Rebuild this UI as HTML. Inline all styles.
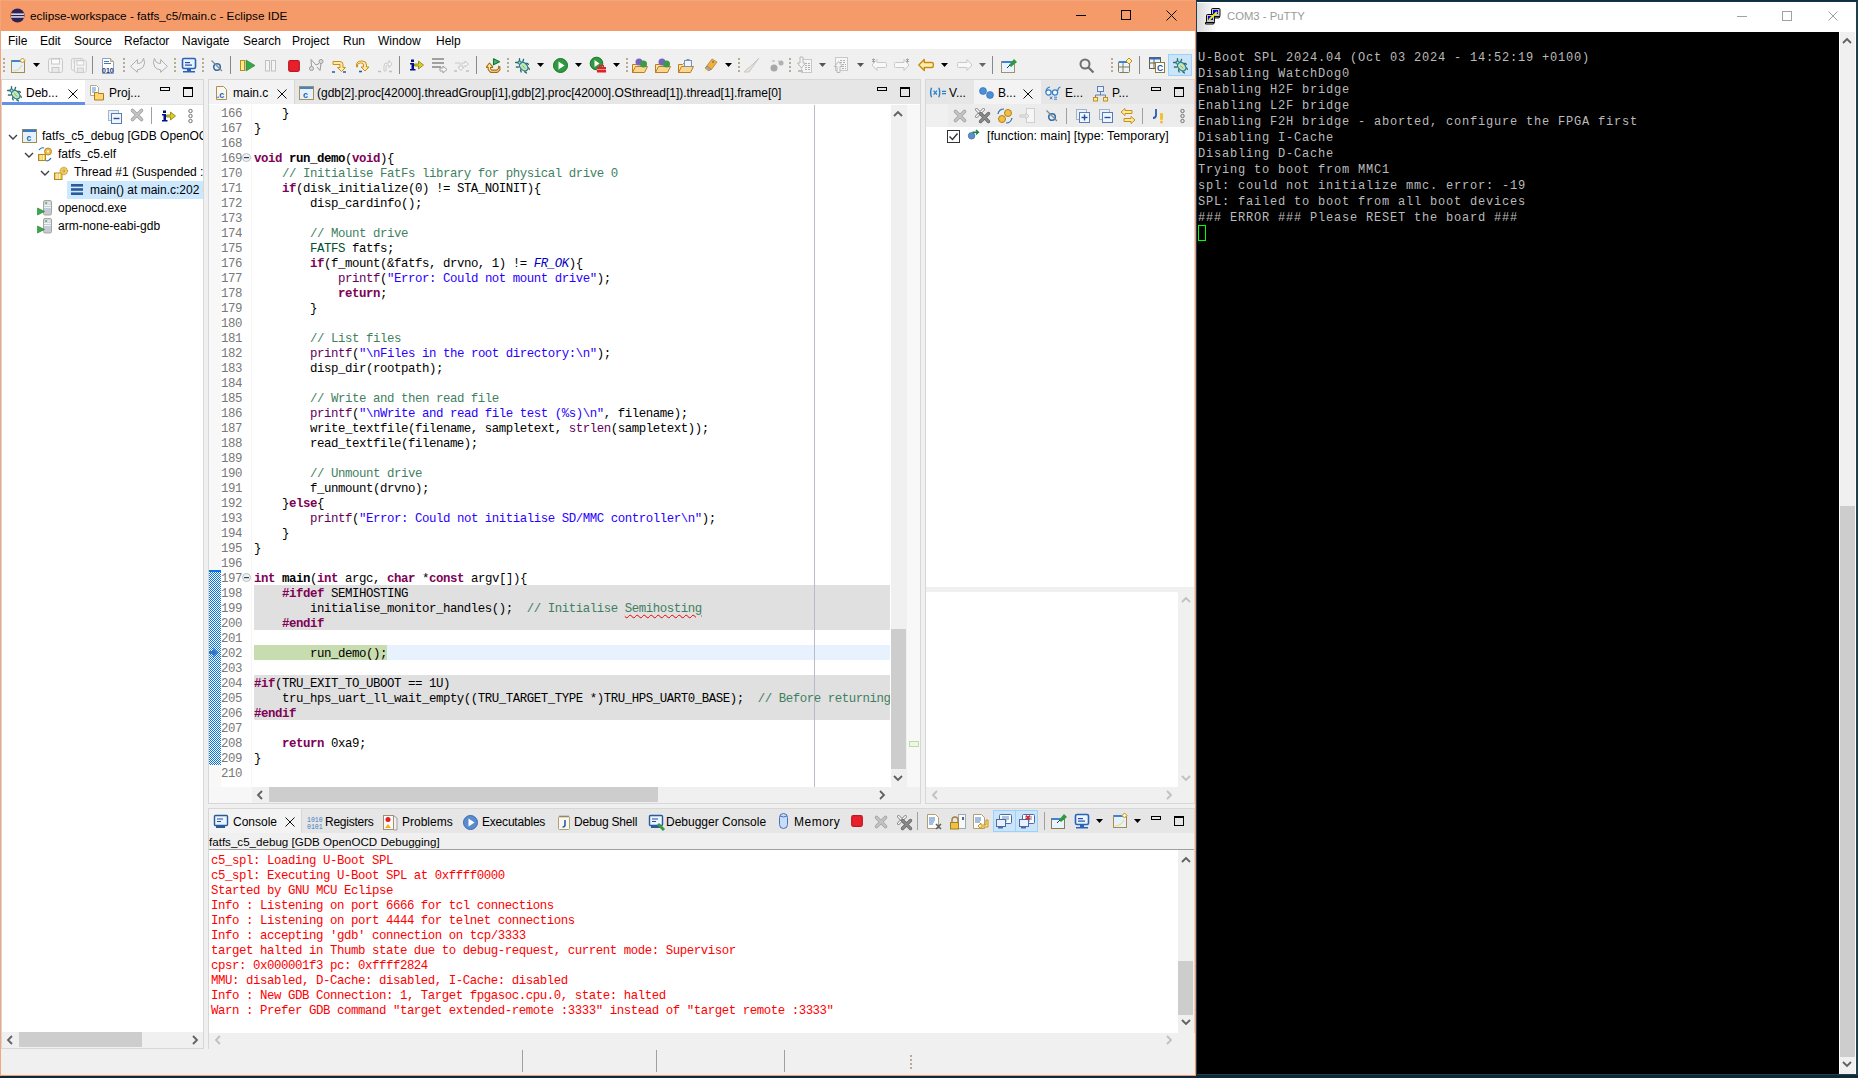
<!DOCTYPE html><html><head><meta charset="utf-8"><style>
html,body{margin:0;padding:0;width:1858px;height:1078px;overflow:hidden;background:#0e2a3a}
body>div,body>svg{position:absolute}
div{position:absolute;box-sizing:border-box}
svg{position:absolute;overflow:visible}
.ui{font-family:"Liberation Sans",sans-serif;font-size:12px;line-height:15px;color:#000;white-space:pre}
.code{font-family:"Liberation Mono",monospace;font-size:12.4px;line-height:15px;white-space:pre;color:#000;letter-spacing:-0.44px}
.con{font-family:"Liberation Mono",monospace;font-size:12.4px;line-height:15px;white-space:pre;color:#f00;letter-spacing:-0.44px}
.pt{font-family:"Liberation Mono",monospace;font-size:12px;line-height:16px;white-space:pre;color:#bbbbbb;letter-spacing:0.8px}
.k{color:#7f0055;font-weight:bold}
.c{color:#3f7f5f}
.s{color:#2a00ff}
.t{color:#005032}
.m{color:#64005a}
.b{font-weight:bold}
.e{color:#0000c0;font-style:italic}
</style></head><body>

<div style="left:0px;top:0px;width:1196px;height:1076px;background:#f59b69;"></div>
<div style="left:0px;top:0px;width:1196px;height:1px;background:#f3a57b;"></div>
<div style="left:0px;top:0px;width:1px;height:1076px;background:#f3a57b;"></div>
<div style="left:1px;top:31px;width:1194px;height:1044px;background:#f0f0f0;"></div>
<svg style="left:10px;top:8px" width="15" height="15" viewBox="0 0 15 15"><circle cx="7.5" cy="7.5" r="7" fill="#2c2255"/><rect x="1" y="5.5" width="13" height="1.3" fill="#fff"/><rect x="1" y="8.3" width="13" height="1.3" fill="#fff"/><path d="M1 7.5a6.5 6.5 0 0 1 0.6-2.7" stroke="#f7941e" stroke-width="1" fill="none"/></svg>
<div class="ui" style="left:30px;top:8px;font-size:11.75px">eclipse-workspace - fatfs_c5/main.c - Eclipse IDE</div>
<div style="left:1076px;top:15px;width:10px;height:1px;background:#000;"></div>
<div style="left:1121px;top:10px;width:10px;height:10px;background:transparent;border:1px solid #000"></div>
<svg style="left:1166px;top:10px" width="11" height="11" viewBox="0 0 11 11"><path d="M0.5 0.5L10.5 10.5M10.5 0.5L0.5 10.5" stroke="#000" stroke-width="1"/></svg>
<div style="left:1px;top:31px;width:1194px;height:18px;background:#fff;"></div>
<div class="ui" style="left:8px;top:34px;">File</div>
<div class="ui" style="left:40px;top:34px;">Edit</div>
<div class="ui" style="left:74px;top:34px;">Source</div>
<div class="ui" style="left:124px;top:34px;">Refactor</div>
<div class="ui" style="left:182px;top:34px;">Navigate</div>
<div class="ui" style="left:243px;top:34px;">Search</div>
<div class="ui" style="left:292px;top:34px;">Project</div>
<div class="ui" style="left:343px;top:34px;">Run</div>
<div class="ui" style="left:378px;top:34px;">Window</div>
<div class="ui" style="left:436px;top:34px;">Help</div>
<div style="left:1px;top:49px;width:1194px;height:30px;background:#f0f0f0;"></div>
<div style="left:1px;top:79px;width:203px;height:970px;background:#fff;border:1px solid #d7d7d7"></div>
<div style="left:2px;top:80px;width:201px;height:24px;background:#f0f0f0;"></div>
<div style="left:2px;top:80px;width:83px;height:22px;background:#fff;"></div>
<div style="left:2px;top:102px;width:83px;height:3px;background:#6390e8;"></div>
<div style="left:85px;top:104px;width:118px;height:1px;background:#e2e2e2;"></div>
<div class="ui" style="left:26px;top:86px;">Deb...</div>
<svg style="left:68px;top:89px" width="10" height="10" viewBox="0 0 10 10"><path d="M0.5 0.5L9.5 9.5M9.5 0.5L0.5 9.5" stroke="#000" stroke-width="0.95"/></svg>
<div class="ui" style="left:109px;top:86px;">Proj...</div>
<div style="left:160px;top:87px;width:10px;height:4px;background:transparent;border:1.3px solid #000"></div>
<div style="left:183px;top:87px;width:10px;height:10px;background:transparent;border:1.3px solid #000;border-top-width:2px"></div>
<div style="left:208px;top:79px;width:713px;height:725px;background:#fff;border:1px solid #d7d7d7"></div>
<div style="left:209px;top:80px;width:711px;height:24px;background:#e6e6e6;"></div>
<div style="left:209px;top:80px;width:85px;height:24px;background:#f3f3f3;"></div>
<div style="left:294px;top:80px;width:1px;height:24px;background:#d8d8d8;"></div>
<div class="ui" style="left:233px;top:86px;">main.c</div>
<svg style="left:277px;top:89px" width="10" height="10" viewBox="0 0 10 10"><path d="M0.5 0.5L9.5 9.5M9.5 0.5L0.5 9.5" stroke="#000" stroke-width="0.95"/></svg>
<div class="ui" style="left:317px;top:86px;">(gdb[2].proc[42000].threadGroup[i1],gdb[2].proc[42000].OSthread[1]).thread[1].frame[0]</div>
<div style="left:877px;top:87px;width:10px;height:4px;background:transparent;border:1.3px solid #000"></div>
<div style="left:900px;top:87px;width:10px;height:10px;background:transparent;border:1.3px solid #000;border-top-width:2px"></div>
<div style="left:925px;top:79px;width:270px;height:725px;background:#fff;border:1px solid #d7d7d7"></div>
<div style="left:926px;top:80px;width:268px;height:24px;background:#e6e6e6;"></div>
<div style="left:974px;top:80px;width:67px;height:24px;background:#f3f3f3;"></div>
<div style="left:926px;top:104px;width:268px;height:23px;background:#ececec;"></div>
<div style="left:926px;top:104px;width:22px;height:23px;background:#f0f0f0;"></div>
<div style="left:926px;top:587px;width:268px;height:5px;background:#f0f0f0;"></div>
<div style="left:1178px;top:592px;width:16px;height:195px;background:#f0f0f0;"></div>
<div style="left:926px;top:787px;width:268px;height:16px;background:#f0f0f0;"></div>
<svg style="left:0;top:0" width="1858" height="1078"><path d="M1182 602L1186 598L1190 602" stroke="#c0c0c0" stroke-width="1.8" fill="none"/></svg>
<svg style="left:0;top:0" width="1858" height="1078"><path d="M1182 776L1186 780L1190 776" stroke="#c0c0c0" stroke-width="1.8" fill="none"/></svg>
<svg style="left:0;top:0" width="1858" height="1078"><path d="M937 791L933 795L937 799" stroke="#c0c0c0" stroke-width="1.8" fill="none"/></svg>
<svg style="left:0;top:0" width="1858" height="1078"><path d="M1167 791L1171 795L1167 799" stroke="#c0c0c0" stroke-width="1.8" fill="none"/></svg>
<svg style="left:929px;top:87px" width="18" height="11" viewBox="0 0 18 11"><g stroke="#2a80c8" fill="none" stroke-width="1.4"><path d="M2.6 0.8Q0.6 5.5 2.6 10.2M9.8 0.8Q11.8 5.5 9.8 10.2"/><path d="M4.6 3.6L8 7.6M8 3.6L4.6 7.6" stroke-width="1.3"/><path d="M13 4.4H17M13 6.6H17" stroke-width="1.1"/></g></svg>
<div class="ui" style="left:949px;top:86px;">V...</div>
<div class="ui" style="left:998px;top:86px;">B...</div>
<svg style="left:1023px;top:89px" width="10" height="10" viewBox="0 0 10 10"><path d="M0.5 0.5L9.5 9.5M9.5 0.5L0.5 9.5" stroke="#000" stroke-width="0.95"/></svg>
<div class="ui" style="left:1065px;top:86px;">E...</div>
<div class="ui" style="left:1112px;top:86px;">P...</div>
<div style="left:1151px;top:87px;width:10px;height:4px;background:transparent;border:1.3px solid #000"></div>
<div style="left:1174px;top:87px;width:10px;height:10px;background:transparent;border:1.3px solid #000;border-top-width:2px"></div>
<div class="ui" style="left:987px;top:129px;font-size:12.3px">[function: main] [type: Temporary]</div>
<svg style="left:947px;top:130px" width="13" height="13" viewBox="0 0 13 13"><rect x="0.5" y="0.5" width="12" height="12" fill="#fff" stroke="#333"/><path d="M2.5 6.5l3 3 5-6" stroke="#333" stroke-width="1.4" fill="none"/></svg>
<div style="left:208px;top:808px;width:987px;height:241px;background:#fff;border:1px solid #d7d7d7;border-bottom:none"></div>
<div style="left:209px;top:809px;width:985px;height:24px;background:#e6e6e6;"></div>
<div style="left:209px;top:809px;width:92px;height:24px;background:#f3f3f3;"></div>
<div style="left:301px;top:809px;width:1px;height:24px;background:#d8d8d8;"></div>
<div style="left:209px;top:833px;width:985px;height:16px;background:#f0f0f0;"></div>
<div style="left:209px;top:849px;width:985px;height:1px;background:#a0a0a0;"></div>
<div class="ui" style="left:209px;top:834px;font-size:11.6px">fatfs_c5_debug [GDB OpenOCD Debugging]</div>
<div style="left:1178px;top:850px;width:16px;height:183px;background:#f0f0f0;"></div>
<div style="left:1178px;top:961px;width:15px;height:54px;background:#cdcdcd;"></div>
<svg style="left:0;top:0" width="1858" height="1078"><path d="M1182 862L1186 858L1190 862" stroke="#606060" stroke-width="1.8" fill="none"/></svg>
<svg style="left:0;top:0" width="1858" height="1078"><path d="M1182 1020L1186 1024L1190 1020" stroke="#606060" stroke-width="1.8" fill="none"/></svg>
<div style="left:209px;top:1033px;width:986px;height:16px;background:#f0f0f0;"></div>
<svg style="left:0;top:0" width="1858" height="1078"><path d="M220 1036L216 1040L220 1044" stroke="#c0c0c0" stroke-width="1.8" fill="none"/></svg>
<svg style="left:0;top:0" width="1858" height="1078"><path d="M1167 1036L1171 1040L1167 1044" stroke="#c0c0c0" stroke-width="1.8" fill="none"/></svg>
<div class="ui" style="left:233px;top:815px;letter-spacing:0px">Console</div>
<div class="ui" style="left:325px;top:815px;letter-spacing:-0.25px">Registers</div>
<div class="ui" style="left:402px;top:815px;letter-spacing:0px">Problems</div>
<div class="ui" style="left:482px;top:815px;letter-spacing:-0.2px">Executables</div>
<div class="ui" style="left:574px;top:815px;letter-spacing:-0.2px">Debug Shell</div>
<div class="ui" style="left:666px;top:815px;letter-spacing:0px">Debugger Console</div>
<div class="ui" style="left:794px;top:815px;letter-spacing:0.5px">Memory</div>
<svg style="left:285px;top:817px" width="10" height="10" viewBox="0 0 10 10"><path d="M0.5 0.5L9.5 9.5M9.5 0.5L0.5 9.5" stroke="#000" stroke-width="0.95"/></svg>
<div style="left:1151px;top:816px;width:10px;height:4px;background:transparent;border:1.3px solid #000"></div>
<div style="left:1174px;top:816px;width:10px;height:10px;background:transparent;border:1.3px solid #000;border-top-width:2px"></div>
<div style="left:522px;top:1050px;width:1px;height:22px;background:#a0a0a0;"></div>
<div style="left:656px;top:1050px;width:1px;height:22px;background:#a0a0a0;"></div>
<div style="left:784px;top:1050px;width:1px;height:22px;background:#a0a0a0;"></div>
<svg style="left:910px;top:1055px" width="2" height="14"><rect x="0" y="0" width="2" height="2" fill="#b8ab94"/><rect x="0" y="4" width="2" height="2" fill="#b8ab94"/><rect x="0" y="8" width="2" height="2" fill="#b8ab94"/><rect x="0" y="12" width="2" height="2" fill="#b8ab94"/></svg>
<div style="left:209px;top:105px;width:12px;height:682px;background:#f8f8f8;"></div>
<svg style="left:209px;top:570px" width="12" height="195"><defs><pattern id="chk" width="2" height="2" patternUnits="userSpaceOnUse"><rect width="2" height="2" fill="#0a74e0"/><rect width="1" height="1" fill="#fff"/><rect x="1" y="1" width="1" height="1" fill="#fff"/></pattern></defs><rect width="12" height="195" fill="url(#chk)"/><rect width="12" height="2" fill="#0a74e0"/></svg>
<div style="left:251px;top:105px;width:1px;height:682px;background:#f6f6f6;"></div>
<div style="left:254px;top:585px;width:636px;height:45px;background:#e0e0e0;"></div>
<div style="left:254px;top:675px;width:636px;height:45px;background:#e0e0e0;"></div>
<div style="left:387px;top:645px;width:503px;height:15px;background:#e8f2fe;"></div>
<div style="left:254px;top:645px;width:133px;height:15px;background:#c7dcaf;"></div>
<div style="left:814px;top:105px;width:1px;height:682px;background:#b8bcc4;"></div>
<div style="left:202px;top:105px;width:40px;height:682px;overflow:hidden"><div class="code" style="left:0;top:2px;width:40px;text-align:right;color:#787878">166</div><div class="code" style="left:0;top:17px;width:40px;text-align:right;color:#787878">167</div><div class="code" style="left:0;top:32px;width:40px;text-align:right;color:#787878">168</div><div class="code" style="left:0;top:47px;width:40px;text-align:right;color:#787878">169</div><div class="code" style="left:0;top:62px;width:40px;text-align:right;color:#787878">170</div><div class="code" style="left:0;top:77px;width:40px;text-align:right;color:#787878">171</div><div class="code" style="left:0;top:92px;width:40px;text-align:right;color:#787878">172</div><div class="code" style="left:0;top:107px;width:40px;text-align:right;color:#787878">173</div><div class="code" style="left:0;top:122px;width:40px;text-align:right;color:#787878">174</div><div class="code" style="left:0;top:137px;width:40px;text-align:right;color:#787878">175</div><div class="code" style="left:0;top:152px;width:40px;text-align:right;color:#787878">176</div><div class="code" style="left:0;top:167px;width:40px;text-align:right;color:#787878">177</div><div class="code" style="left:0;top:182px;width:40px;text-align:right;color:#787878">178</div><div class="code" style="left:0;top:197px;width:40px;text-align:right;color:#787878">179</div><div class="code" style="left:0;top:212px;width:40px;text-align:right;color:#787878">180</div><div class="code" style="left:0;top:227px;width:40px;text-align:right;color:#787878">181</div><div class="code" style="left:0;top:242px;width:40px;text-align:right;color:#787878">182</div><div class="code" style="left:0;top:257px;width:40px;text-align:right;color:#787878">183</div><div class="code" style="left:0;top:272px;width:40px;text-align:right;color:#787878">184</div><div class="code" style="left:0;top:287px;width:40px;text-align:right;color:#787878">185</div><div class="code" style="left:0;top:302px;width:40px;text-align:right;color:#787878">186</div><div class="code" style="left:0;top:317px;width:40px;text-align:right;color:#787878">187</div><div class="code" style="left:0;top:332px;width:40px;text-align:right;color:#787878">188</div><div class="code" style="left:0;top:347px;width:40px;text-align:right;color:#787878">189</div><div class="code" style="left:0;top:362px;width:40px;text-align:right;color:#787878">190</div><div class="code" style="left:0;top:377px;width:40px;text-align:right;color:#787878">191</div><div class="code" style="left:0;top:392px;width:40px;text-align:right;color:#787878">192</div><div class="code" style="left:0;top:407px;width:40px;text-align:right;color:#787878">193</div><div class="code" style="left:0;top:422px;width:40px;text-align:right;color:#787878">194</div><div class="code" style="left:0;top:437px;width:40px;text-align:right;color:#787878">195</div><div class="code" style="left:0;top:452px;width:40px;text-align:right;color:#787878">196</div><div class="code" style="left:0;top:467px;width:40px;text-align:right;color:#787878">197</div><div class="code" style="left:0;top:482px;width:40px;text-align:right;color:#787878">198</div><div class="code" style="left:0;top:497px;width:40px;text-align:right;color:#787878">199</div><div class="code" style="left:0;top:512px;width:40px;text-align:right;color:#787878">200</div><div class="code" style="left:0;top:527px;width:40px;text-align:right;color:#787878">201</div><div class="code" style="left:0;top:542px;width:40px;text-align:right;color:#787878">202</div><div class="code" style="left:0;top:557px;width:40px;text-align:right;color:#787878">203</div><div class="code" style="left:0;top:572px;width:40px;text-align:right;color:#787878">204</div><div class="code" style="left:0;top:587px;width:40px;text-align:right;color:#787878">205</div><div class="code" style="left:0;top:602px;width:40px;text-align:right;color:#787878">206</div><div class="code" style="left:0;top:617px;width:40px;text-align:right;color:#787878">207</div><div class="code" style="left:0;top:632px;width:40px;text-align:right;color:#787878">208</div><div class="code" style="left:0;top:647px;width:40px;text-align:right;color:#787878">209</div><div class="code" style="left:0;top:662px;width:40px;text-align:right;color:#787878">210</div></div>
<div style="left:254px;top:105px;width:636px;height:682px;overflow:hidden"><div class="code" style="left:0;top:2px">    }</div><div class="code" style="left:0;top:17px">}</div><div class="code" style="left:0;top:32px"></div><div class="code" style="left:0;top:47px"><span class="k">void</span> <span class="b">run_demo</span>(<span class="k">void</span>){</div><div class="code" style="left:0;top:62px">    <span class="c">// Initialise FatFs library for physical drive 0</span></div><div class="code" style="left:0;top:77px">    <span class="k">if</span>(disk_initialize(0) != STA_NOINIT){</div><div class="code" style="left:0;top:92px">        disp_cardinfo();</div><div class="code" style="left:0;top:107px"></div><div class="code" style="left:0;top:122px">        <span class="c">// Mount drive</span></div><div class="code" style="left:0;top:137px">        <span class="t">FATFS</span> fatfs;</div><div class="code" style="left:0;top:152px">        <span class="k">if</span>(f_mount(&amp;fatfs, drvno, 1) != <span class="e">FR_OK</span>){</div><div class="code" style="left:0;top:167px">            <span class="m">printf</span>(<span class="s">"Error: Could not mount drive"</span>);</div><div class="code" style="left:0;top:182px">            <span class="k">return</span>;</div><div class="code" style="left:0;top:197px">        }</div><div class="code" style="left:0;top:212px"></div><div class="code" style="left:0;top:227px">        <span class="c">// List files</span></div><div class="code" style="left:0;top:242px">        <span class="m">printf</span>(<span class="s">"\nFiles in the root directory:\n"</span>);</div><div class="code" style="left:0;top:257px">        disp_dir(rootpath);</div><div class="code" style="left:0;top:272px"></div><div class="code" style="left:0;top:287px">        <span class="c">// Write and then read file</span></div><div class="code" style="left:0;top:302px">        <span class="m">printf</span>(<span class="s">"\nWrite and read file test (%s)\n"</span>, filename);</div><div class="code" style="left:0;top:317px">        write_textfile(filename, sampletext, <span class="m">strlen</span>(sampletext));</div><div class="code" style="left:0;top:332px">        read_textfile(filename);</div><div class="code" style="left:0;top:347px"></div><div class="code" style="left:0;top:362px">        <span class="c">// Unmount drive</span></div><div class="code" style="left:0;top:377px">        f_unmount(drvno);</div><div class="code" style="left:0;top:392px">    }<span class="k">else</span>{</div><div class="code" style="left:0;top:407px">        <span class="m">printf</span>(<span class="s">"Error: Could not initialise SD/MMC controller\n"</span>);</div><div class="code" style="left:0;top:422px">    }</div><div class="code" style="left:0;top:437px">}</div><div class="code" style="left:0;top:452px"></div><div class="code" style="left:0;top:467px"><span class="k">int</span> <span class="b">main</span>(<span class="k">int</span> argc, <span class="k">char</span> *<span class="k">const</span> argv[]){</div><div class="code" style="left:0;top:482px">    <span class="k">#ifdef</span> SEMIHOSTING</div><div class="code" style="left:0;top:497px">        initialise_monitor_handles();  <span class="c">// Initialise </span><span class="c" style="text-decoration:underline wavy #e00;text-decoration-thickness:1px;text-underline-offset:2px">Semihosting</span></div><div class="code" style="left:0;top:512px">    <span class="k">#endif</span></div><div class="code" style="left:0;top:527px"></div><div class="code" style="left:0;top:542px">        run_demo();</div><div class="code" style="left:0;top:557px"></div><div class="code" style="left:0;top:572px"><span class="k">#if</span>(TRU_EXIT_TO_UBOOT == 1U)</div><div class="code" style="left:0;top:587px">    tru_hps_uart_ll_wait_empty((TRU_TARGET_TYPE *)TRU_HPS_UART0_BASE);  <span class="c">// Before returning to U-Boot</span></div><div class="code" style="left:0;top:602px"><span class="k">#endif</span></div><div class="code" style="left:0;top:617px"></div><div class="code" style="left:0;top:632px">    <span class="k">return</span> 0xa9;</div><div class="code" style="left:0;top:647px">}</div><div class="code" style="left:0;top:662px"></div></div>
<svg style="left:242px;top:153px" width="9" height="9" viewBox="0 0 9 9"><circle cx="4.5" cy="4.5" r="4" fill="#eef2f6" stroke="#b9c0c8" stroke-width="1"/><rect x="2" y="4" width="5" height="1.2" fill="#404040"/></svg>
<svg style="left:242px;top:573px" width="9" height="9" viewBox="0 0 9 9"><circle cx="4.5" cy="4.5" r="4" fill="#eef2f6" stroke="#b9c0c8" stroke-width="1"/><rect x="2" y="4" width="5" height="1.2" fill="#404040"/></svg>
<svg style="left:209px;top:648px" width="10" height="9" viewBox="0 0 10 9"><path d="M0 3h4v-3l5 4.5-5 4.5v-3h-4z" fill="#2f78c8"/></svg>
<div style="left:891px;top:105px;width:16px;height:682px;background:#f0f0f0;"></div>
<div style="left:891px;top:629px;width:15px;height:140px;background:#cdcdcd;"></div>
<svg style="left:0;top:0" width="1858" height="1078"><path d="M894 116L898 112L902 116" stroke="#606060" stroke-width="1.8" fill="none"/></svg>
<svg style="left:0;top:0" width="1858" height="1078"><path d="M894 776L898 780L902 776" stroke="#606060" stroke-width="1.8" fill="none"/></svg>
<div style="left:907px;top:105px;width:13px;height:682px;background:#f8f8f8;"></div>
<div style="left:909px;top:741px;width:10px;height:6px;background:#eef6e6;border:1px solid #bcdca4"></div>
<div style="left:209px;top:787px;width:43px;height:16px;background:#f7f7f7;"></div>
<div style="left:252px;top:787px;width:668px;height:16px;background:#f0f0f0;"></div>
<div style="left:269px;top:787px;width:389px;height:15px;background:#cdcdcd;"></div>
<svg style="left:0;top:0" width="1858" height="1078"><path d="M262 791L258 795L262 799" stroke="#606060" stroke-width="1.8" fill="none"/></svg>
<svg style="left:0;top:0" width="1858" height="1078"><path d="M880 791L884 795L880 799" stroke="#606060" stroke-width="1.8" fill="none"/></svg>
<div style="left:67px;top:181px;width:136px;height:18px;background:#cce8ff;"></div>
<div style="left:2px;top:105px;width:201px;height:927px;overflow:hidden">
<svg style="left:6px;top:29px" width="10" height="6"><path d="M1 1L5 5L9 1" stroke="#404040" stroke-width="1.4" fill="none"/></svg>
<svg style="left:20px;top:24px" width="16" height="16" viewBox="0 0 16 16"><rect x="0.5" y="0.5" width="14" height="13" fill="#e4f2fe" stroke="#a08a48"/><rect x="1" y="0.5" width="13" height="2.5" fill="#3a7ac8"/><text x="4.5" y="11.5" font-family="Liberation Sans" font-weight="bold" font-size="8.5" fill="#2a62b0">c</text></svg>
<div class="ui" style="left:40px;top:24px">fatfs_c5_debug [GDB OpenOCD Debugging]</div>
<svg style="left:22px;top:47px" width="10" height="6"><path d="M1 1L5 5L9 1" stroke="#404040" stroke-width="1.4" fill="none"/></svg>
<svg style="left:36px;top:42px" width="16" height="16" viewBox="0 0 16 16"><rect x="0.5" y="7.5" width="7" height="6" fill="#f0d060" stroke="#b08a20"/><path d="M3 8v5M5.5 8v5" stroke="#fff4c0"/><circle cx="10" cy="4.5" r="3.5" fill="#f2c040" stroke="#b08a40"/><circle cx="10" cy="4.5" r="1" fill="#fff"/><path d="M1 3q2-3 5-2M8 14q3 0 5-3" stroke="#2a6ab0" fill="none" stroke-width="1.2"/></svg>
<div class="ui" style="left:56px;top:42px">fatfs_c5.elf</div>
<svg style="left:38px;top:65px" width="10" height="6"><path d="M1 1L5 5L9 1" stroke="#404040" stroke-width="1.4" fill="none"/></svg>
<svg style="left:52px;top:61px" width="16" height="16" viewBox="0 0 16 16"><rect x="0.5" y="7" width="7.5" height="6.5" fill="#f0d060" stroke="#b08a20"/><path d="M3 7.5v5.5M5.5 7.5v5.5" stroke="#fff4c0" stroke-width="1.2"/><circle cx="9.8" cy="5" r="3.8" fill="#f2c040" stroke="#a08040" stroke-width="0.8" stroke-dasharray="1.2 0.8"/><circle cx="9.8" cy="5" r="2.6" fill="#f8d060"/><circle cx="9.8" cy="5" r="1" fill="#fff" stroke="#806030" stroke-width="0.6"/></svg>
<div class="ui" style="left:72px;top:60px">Thread #1 (Suspended : Breakpoint)</div>
<svg style="left:69px;top:79px" width="16" height="16" viewBox="0 0 16 16"><rect x="0" y="0" width="12" height="2.6" fill="#2a5a9a"/><rect x="0" y="4.2" width="12" height="2.6" fill="#2a5a9a"/><rect x="0" y="8.4" width="12" height="2.6" fill="#2a5a9a"/></svg>
<div class="ui" style="left:88px;top:78px">main() at main.c:202 0xffff2824</div>
<svg style="left:35px;top:95px" width="16" height="16" viewBox="0 0 16 16"><rect x="6.5" y="0.5" width="8" height="14.5" rx="1.5" fill="#c4cad8" stroke="#a8a890"/><rect x="7.5" y="1.5" width="6" height="3" fill="#dfe4ee"/><path d="M8.5 1.8v2.4l2-1.2z" fill="#2a9a40"/><path d="M7 5.5h7M7 7.5h7" stroke="#f0f2f8" stroke-width="1"/><path d="M0.5 8L7.5 11.5 0.5 15z" fill="#3aa84a" stroke="#208030" stroke-width="0.6"/></svg>
<div class="ui" style="left:56px;top:96px">openocd.exe</div>
<svg style="left:35px;top:113px" width="16" height="16" viewBox="0 0 16 16"><rect x="6.5" y="0.5" width="8" height="14.5" rx="1.5" fill="#c4cad8" stroke="#a8a890"/><rect x="7.5" y="1.5" width="6" height="3" fill="#dfe4ee"/><path d="M8.5 1.8v2.4l2-1.2z" fill="#2a9a40"/><path d="M7 5.5h7M7 7.5h7" stroke="#f0f2f8" stroke-width="1"/><path d="M0.5 8L7.5 11.5 0.5 15z" fill="#3aa84a" stroke="#208030" stroke-width="0.6"/></svg>
<div class="ui" style="left:56px;top:114px">arm-none-eabi-gdb</div>
</div>
<div style="left:203px;top:105px;width:1px;height:927px;background:#d7d7d7;"></div>
<div style="left:2px;top:1032px;width:201px;height:16px;background:#f0f0f0;"></div>
<div style="left:19px;top:1032px;width:123px;height:15px;background:#cdcdcd;"></div>
<svg style="left:0;top:0" width="1858" height="1078"><path d="M12 1036L8 1040L12 1044" stroke="#606060" stroke-width="1.8" fill="none"/></svg>
<svg style="left:0;top:0" width="1858" height="1078"><path d="M193 1036L197 1040L193 1044" stroke="#606060" stroke-width="1.8" fill="none"/></svg>
<div class="con" style="left:211px;top:854px;">c5_spl: Loading U-Boot SPL</div>
<div class="con" style="left:211px;top:869px;">c5_spl: Executing U-Boot SPL at 0xffff0000</div>
<div class="con" style="left:211px;top:884px;">Started by GNU MCU Eclipse</div>
<div class="con" style="left:211px;top:899px;">Info : Listening on port 6666 for tcl connections</div>
<div class="con" style="left:211px;top:914px;">Info : Listening on port 4444 for telnet connections</div>
<div class="con" style="left:211px;top:929px;">Info : accepting 'gdb' connection on tcp/3333</div>
<div class="con" style="left:211px;top:944px;">target halted in Thumb state due to debug-request, current mode: Supervisor</div>
<div class="con" style="left:211px;top:959px;">cpsr: 0x000001f3 pc: 0xffff2824</div>
<div class="con" style="left:211px;top:974px;">MMU: disabled, D-Cache: disabled, I-Cache: disabled</div>
<div class="con" style="left:211px;top:989px;">Info : New GDB Connection: 1, Target fpgasoc.cpu.0, state: halted</div>
<div class="con" style="left:211px;top:1004px;">Warn : Prefer GDB command "target extended-remote :3333" instead of "target remote :3333"</div>
<div style="left:1196px;top:0px;width:662px;height:1075px;background:#20404e;"></div>
<div style="left:1196px;top:0px;width:662px;height:1px;background:#053248;"></div>
<div style="left:1197px;top:1px;width:660px;height:1px;background:#1c3242;"></div>
<div style="left:1197px;top:2px;width:659px;height:30px;background:#fff;"></div>
<div style="left:1197px;top:3px;width:20px;height:29px;background:linear-gradient(90deg,#d8d8d8,#fff);"></div>
<div class="ui" style="left:1227px;top:9px;color:#9a9a9a;font-size:11.3px">COM3 - PuTTY</div>
<div style="left:1737px;top:16px;width:10px;height:1px;background:#a0a0a0;"></div>
<div style="left:1782px;top:11px;width:10px;height:10px;background:transparent;border:1px solid #a0a0a0"></div>
<svg style="left:1828px;top:11px" width="10" height="10" viewBox="0 0 10 10"><path d="M0.5 0.5L9.5 9.5M9.5 0.5L0.5 9.5" stroke="#a0a0a0" stroke-width="1"/></svg>
<div style="left:1197px;top:32px;width:642px;height:1042px;background:#000;"></div>
<div style="left:1839px;top:32px;width:17px;height:1042px;background:#fff;"></div>
<div style="left:1840px;top:32px;width:15px;height:1042px;background:#f0f0f0;"></div>
<div style="left:1840px;top:506px;width:15px;height:551px;background:#cdcdcd;"></div>
<svg style="left:0;top:0" width="1858" height="1078"><path d="M1843 43L1847 39L1851 43" stroke="#606060" stroke-width="1.8" fill="none"/></svg>
<svg style="left:0;top:0" width="1858" height="1078"><path d="M1843 1062L1847 1066L1851 1062" stroke="#606060" stroke-width="1.8" fill="none"/></svg>
<div class="pt" style="left:1198px;top:50px;">U-Boot SPL 2024.04 (Oct 03 2024 - 14:52:19 +0100)</div>
<div class="pt" style="left:1198px;top:66px;">Disabling WatchDog0</div>
<div class="pt" style="left:1198px;top:82px;">Enabling H2F bridge</div>
<div class="pt" style="left:1198px;top:98px;">Enabling L2F bridge</div>
<div class="pt" style="left:1198px;top:114px;">Enabling F2H bridge - aborted, configure the FPGA first</div>
<div class="pt" style="left:1198px;top:130px;">Disabling I-Cache</div>
<div class="pt" style="left:1198px;top:146px;">Disabling D-Cache</div>
<div class="pt" style="left:1198px;top:162px;">Trying to boot from MMC1</div>
<div class="pt" style="left:1198px;top:178px;">spl: could not initialize mmc. error: -19</div>
<div class="pt" style="left:1198px;top:194px;">SPL: failed to boot from all boot devices</div>
<div class="pt" style="left:1198px;top:210px;">### ERROR ### Please RESET the board ###</div>
<div style="left:1198px;top:225px;width:8px;height:16px;background:transparent;border:1px solid #00ff00"></div>
<svg style="left:3px;top:58px" width="2" height="14" viewBox="0 0 2 14"><rect x="0" y="0" width="2" height="2" fill="#b8ab94"/><rect x="0" y="4" width="2" height="2" fill="#b8ab94"/><rect x="0" y="8" width="2" height="2" fill="#b8ab94"/><rect x="0" y="12" width="2" height="2" fill="#b8ab94"/></svg>
<svg style="left:11px;top:58px" width="16" height="16" viewBox="0 0 16 16"><rect x="0.5" y="2.5" width="13" height="12" fill="#e4f2fe" stroke="#a88a4c"/><rect x="1" y="2" width="12" height="2" fill="#3c83d4"/><path d="M11.5 0l2.5 2.5-2.5 2.5-2.5-2.5z" fill="#fff6c8" stroke="#c09018"/><path d="M2 13q6 0 9-6" stroke="#f0d890" stroke-width="1.2" fill="none"/></svg>
<svg style="left:33px;top:63px" width="7" height="4" viewBox="0 0 7 4"><path d="M0 0h7l-3.5 4z" fill="#000"/></svg>
<svg style="left:48px;top:58px" width="16" height="16" viewBox="0 0 16 16"><rect x="0.5" y="0.5" width="14" height="14" rx="2" fill="#f4f4f4" stroke="#c8c8c8"/><rect x="3.5" y="1" width="8" height="5" fill="#fafafa" stroke="#c8c8c8"/><rect x="4" y="9.5" width="7" height="5" fill="#e8e8e8" stroke="#c8c8c8"/></svg>
<svg style="left:71px;top:58px" width="16" height="16" viewBox="0 0 16 16"><g transform="translate(0,0) scale(0.85)"><rect x="0.5" y="0.5" width="14" height="14" rx="2" fill="#f4f4f4" stroke="#c8c8c8"/><rect x="3.5" y="1" width="8" height="5" fill="#fafafa" stroke="#c8c8c8"/><rect x="4" y="9.5" width="7" height="5" fill="#e8e8e8" stroke="#c8c8c8"/></g><g transform="translate(3,2) scale(0.85)"><rect x="0.5" y="0.5" width="14" height="14" rx="2" fill="#f4f4f4" stroke="#c8c8c8"/><rect x="3.5" y="1" width="8" height="5" fill="#fafafa" stroke="#c8c8c8"/><rect x="4" y="9.5" width="7" height="5" fill="#e8e8e8" stroke="#c8c8c8"/></g></svg>
<svg style="left:92px;top:56px" width="1" height="18" viewBox="0 0 1 18"><rect x="0" y="0" width="1" height="18" fill="#888"/></svg>
<svg style="left:101px;top:58px" width="16" height="16" viewBox="0 0 16 16"><path d="M1.5 0.5h8l3 3v12h-11z" fill="#fff" stroke="#8fa0c0"/><path d="M9.5 0.5v3h3" fill="#e8d8a0" stroke="#c0a860"/><rect x="3" y="3" width="5" height="1" fill="#4a78c0"/><rect x="3" y="5" width="7" height="1" fill="#4a78c0"/><text x="1" y="15" font-family="Liberation Sans" font-weight="bold" font-size="7" fill="#1a3a78">010</text></svg>
<svg style="left:123px;top:58px" width="2" height="14" viewBox="0 0 2 14"><rect x="0" y="0" width="2" height="2" fill="#b8ab94"/><rect x="0" y="4" width="2" height="2" fill="#b8ab94"/><rect x="0" y="8" width="2" height="2" fill="#b8ab94"/><rect x="0" y="12" width="2" height="2" fill="#b8ab94"/></svg>
<svg style="left:130px;top:57px" width="16" height="16" viewBox="0 0 16 16"><g ><path d="M0.6 9.4L7.4 2.6V6.4H9.3Q12 6.4 13.6 1.4Q15.8 6 13.2 10Q11.2 12.4 7.4 12.8V15.3Z" fill="#f2f2f2" stroke="#a8a8a8" stroke-width="0.9" stroke-linejoin="round"/></g></svg>
<svg style="left:152px;top:57px" width="16" height="16" viewBox="0 0 16 16"><g transform="translate(16,0) scale(-1,1)"><path d="M0.6 9.4L7.4 2.6V6.4H9.3Q12 6.4 13.6 1.4Q15.8 6 13.2 10Q11.2 12.4 7.4 12.8V15.3Z" fill="#f2f2f2" stroke="#a8a8a8" stroke-width="0.9" stroke-linejoin="round"/></g></svg>
<svg style="left:174px;top:58px" width="2" height="14" viewBox="0 0 2 14"><rect x="0" y="0" width="2" height="2" fill="#b8ab94"/><rect x="0" y="4" width="2" height="2" fill="#b8ab94"/><rect x="0" y="8" width="2" height="2" fill="#b8ab94"/><rect x="0" y="12" width="2" height="2" fill="#b8ab94"/></svg>
<svg style="left:182px;top:58px" width="16" height="16" viewBox="0 0 16 16"><rect x="0.5" y="0.5" width="13" height="10" rx="1.5" fill="#e8f4ff" stroke="#2a62b8" stroke-width="1.6"/><rect x="3" y="4" width="5" height="1.2" fill="#2a4a98"/><rect x="3" y="6.5" width="7" height="1.2" fill="#2a4a98"/><rect x="5" y="11" width="4" height="2" fill="#2a62b8"/><rect x="1" y="13" width="12" height="1.5" fill="#2a62b8"/></svg>
<svg style="left:202px;top:58px" width="2" height="14" viewBox="0 0 2 14"><rect x="0" y="0" width="2" height="2" fill="#b8ab94"/><rect x="0" y="4" width="2" height="2" fill="#b8ab94"/><rect x="0" y="8" width="2" height="2" fill="#b8ab94"/><rect x="0" y="12" width="2" height="2" fill="#b8ab94"/></svg>
<svg style="left:211px;top:60px" width="12" height="12" viewBox="0 0 12 12"><circle cx="6" cy="7" r="3.3" fill="none" stroke="#2f6fb0" stroke-width="1.6"/><path d="M0.5 0.5L11 11" stroke="#888" stroke-width="1.3"/></svg>
<svg style="left:230px;top:56px" width="1" height="18" viewBox="0 0 1 18"><rect x="0" y="0" width="1" height="18" fill="#888"/></svg>
<svg style="left:240px;top:60px" width="16" height="16" viewBox="0 0 16 16"><rect x="0.5" y="0.5" width="4" height="10" fill="#ffe890" stroke="#b89018"/><path d="M6 0v11l9-5.5z" fill="#3aa84a" stroke="#1e7a30" stroke-width="0.6"/></svg>
<svg style="left:265px;top:60px" width="16" height="16" viewBox="0 0 16 16"><rect x="0.5" y="0.5" width="4" height="10.5" fill="#f4f4f4" stroke="#c0c0c0"/><rect x="6.5" y="0.5" width="4" height="10.5" fill="#f4f4f4" stroke="#c0c0c0"/></svg>
<svg style="left:288px;top:60px" width="12" height="12" viewBox="0 0 12 12"><rect x="0.7" y="0.7" width="10.6" height="10.6" rx="1.5" fill="#e8202e" stroke="#c01820" stroke-width="1.2"/></svg>
<svg style="left:309px;top:59px" width="16" height="16" viewBox="0 0 16 16"><circle cx="2.5" cy="9.5" r="2" fill="#ddd" stroke="#999"/><circle cx="12" cy="2.5" r="2" fill="#ddd" stroke="#999"/><path d="M2.5 7L2 0.5 7 6 9 5 10 4.5M12 4.5L11 11.5 8 8" stroke="#999" fill="none"/></svg>
<svg style="left:332px;top:60px" width="16" height="16" viewBox="0 0 16 16"><path d="M1 1.5h7q3 0 3 3v3h2.5l-4 4-4-4h2.5v-3h-7z" fill="#ffe8a8" stroke="#c89018" stroke-linejoin="round"/><path d="M0 12h3M11 12h3" stroke="#2a5a98" stroke-width="1.6"/></svg>
<svg style="left:355px;top:60px" width="16" height="16" viewBox="0 0 16 16"><path d="M1.5 7v-2q0-4 5-4h1q4 0 4 4v2h2.5l-4 4-4-4h2.5v-2q0-2-2-2h-1q-3 0-3 2v2z" fill="#ffe8a8" stroke="#c89018" stroke-linejoin="round"/><path d="M4 11.5h3" stroke="#2a5a98" stroke-width="1.6"/></svg>
<svg style="left:378px;top:60px" width="16" height="16" viewBox="0 0 16 16"><path d="M6 11v-5q0-3 3-3h2v-2.5l3 3.5-3 3.5v-2.5h-2q-1 0-1 1v5z" fill="#f8f8f8" stroke="#c8c8c8" stroke-linejoin="round"/><path d="M0 11.5h3M11 11.5h3" stroke="#c0c0c0" stroke-width="1.4"/></svg>
<svg style="left:399px;top:56px" width="1" height="18" viewBox="0 0 1 18"><rect x="0" y="0" width="1" height="18" fill="#888"/></svg>
<svg style="left:408px;top:59px" width="16" height="16" viewBox="0 0 16 16"><path d="M2 4h4v6h1.5v1.5h-5.5v-1.5h1.5v-4.5h-1.5z" fill="#00108c"/><rect x="3" y="0.5" width="3" height="2.5" fill="#00108c"/><path d="M6.5 5h4v-3l5 4-5 4v-3h-4z" fill="#d8d020" stroke="#8a7a10" stroke-width="0.8"/></svg>
<svg style="left:432px;top:58px" width="16" height="16" viewBox="0 0 16 16"><rect x="0" y="0" width="12" height="2" fill="#a0a0a0"/><rect x="0" y="4" width="12" height="2" fill="#a0a0a0"/><rect x="0" y="8" width="9" height="2" fill="#a0a0a0"/><path d="M8 10h3v-2l4 3.5-4 3.5v-2h-3z" fill="#f4f4f4" stroke="#a0a0a0"/></svg>
<svg style="left:454px;top:58px" width="16" height="16" viewBox="0 0 16 16"><path d="M1 5h5v4l-2 0 3 3.5 3-3.5-2 0v-4h3v-2l3.5 3-3.5 3v-2" fill="#f6f6f6" stroke="#c8c8c8" stroke-linejoin="round"/><path d="M0 13h3M12 13h3" stroke="#c0c0c0" stroke-width="1.4"/></svg>
<svg style="left:476px;top:56px" width="1" height="18" viewBox="0 0 1 18"><rect x="0" y="0" width="1" height="18" fill="#888"/></svg>
<svg style="left:486px;top:58px" width="16" height="16" viewBox="0 0 16 16"><path d="M7.5 0.7v6l6-3z" fill="#58b070" stroke="#0a7a30" stroke-width="1.1" stroke-linejoin="round"/><path d="M3.5 5L0.6 8.6V9.4H2.2V11.6L4.6 14.4H11.4L13.9 11.9V8.8L12.6 8.4V10.4L10.9 12.1H5.6L4.6 11V9.4H6.6V8.6z" fill="#ffe9a8" stroke="#a86c10" stroke-width="1.1" stroke-linejoin="round"/></svg>
<svg style="left:507px;top:58px" width="2" height="14" viewBox="0 0 2 14"><rect x="0" y="0" width="2" height="2" fill="#b8ab94"/><rect x="0" y="4" width="2" height="2" fill="#b8ab94"/><rect x="0" y="8" width="2" height="2" fill="#b8ab94"/><rect x="0" y="12" width="2" height="2" fill="#b8ab94"/></svg>
<svg style="left:515px;top:58px" width="16" height="16" viewBox="0 0 16 16"><g stroke="#2e6a54" stroke-width="1.3" stroke-linecap="round" fill="none"><path d="M4.5 3.3V0.6M7.6 4.4L8.6 1.3M3.3 4.5H0.6M10.6 5.4L12.3 5.5 13.4 6.3M5 8.2L3.3 9.2 1.4 9M12.3 9.6L13.6 10 14.4 11.3M6.2 11L5.6 12.6 6.2 14M9.8 12.6L10 14 11.5 15"/></g><ellipse cx="8.7" cy="8.6" rx="3.5" ry="4.9" transform="rotate(-42 8.7 8.6)" fill="#c8e4b0" stroke="#1f78a0" stroke-width="1.2"/><path d="M7.5 7.5l2.5 3" stroke="#78b068" stroke-width="0.9"/><circle cx="4.6" cy="4.6" r="1.6" fill="#b8dca8" stroke="#1f78a0" stroke-width="1.1"/></svg>
<svg style="left:537px;top:63px" width="7" height="4" viewBox="0 0 7 4"><path d="M0 0h7l-3.5 4z" fill="#000"/></svg>
<svg style="left:553px;top:58px" width="16" height="16" viewBox="0 0 16 16"><circle cx="7.5" cy="7.5" r="7" fill="#2e9a40" stroke="#1a7028"/><path d="M5.5 3.5v8l6-4z" fill="#fff"/></svg>
<svg style="left:575px;top:63px" width="7" height="4" viewBox="0 0 7 4"><path d="M0 0h7l-3.5 4z" fill="#000"/></svg>
<svg style="left:590px;top:57px" width="16" height="16" viewBox="0 0 16 16"><circle cx="6.5" cy="6.5" r="6.3" fill="#2e9a40" stroke="#1a7028"/><path d="M4.5 3v7l5-3.5z" fill="#fff"/><rect x="7" y="10" width="9" height="5.5" fill="#e0202a"/><rect x="9.5" y="8.5" width="4" height="2" fill="none" stroke="#e0202a"/><rect x="7" y="12" width="9" height="1" fill="#ff9090"/></svg>
<svg style="left:613px;top:63px" width="7" height="4" viewBox="0 0 7 4"><path d="M0 0h7l-3.5 4z" fill="#000"/></svg>
<svg style="left:626px;top:58px" width="2" height="14" viewBox="0 0 2 14"><rect x="0" y="0" width="2" height="2" fill="#b8ab94"/><rect x="0" y="4" width="2" height="2" fill="#b8ab94"/><rect x="0" y="8" width="2" height="2" fill="#b8ab94"/><rect x="0" y="12" width="2" height="2" fill="#b8ab94"/></svg>
<svg style="left:632px;top:58px" width="16" height="16" viewBox="0 0 16 16"><path d="M0.5 6.5h4l1-1h4v9h-9z" fill="#fce6a8" stroke="#c07a20"/><path d="M0.5 14.5l3-6h12l-3 6z" fill="#f8d890" stroke="#c07a20"/><circle cx="7" cy="4" r="3.5" fill="#7a62c0"/><circle cx="11.5" cy="6" r="3.5" fill="#3a9a48"/></svg>
<svg style="left:655px;top:58px" width="16" height="16" viewBox="0 0 16 16"><path d="M0.5 6.5h4l1-1h4v9h-9z" fill="#fce6a8" stroke="#c07a20"/><path d="M0.5 14.5l3-6h12l-3 6z" fill="#f8d890" stroke="#c07a20"/><circle cx="7" cy="4" r="3.5" fill="#7a62c0"/><circle cx="11.5" cy="6" r="3.5" fill="#3a9a48"/></svg>
<svg style="left:678px;top:58px" width="16" height="16" viewBox="0 0 16 16"><path d="M0.5 6.5h4l1-1h4v9h-9z" fill="#fce6a8" stroke="#c07a20"/><path d="M0.5 14.5l3-6h12l-3 6z" fill="#f8d890" stroke="#c07a20"/><rect x="6.5" y="2.5" width="7" height="6" fill="#eef4ff" stroke="#8090b0"/><rect x="8.5" y="1" width="3" height="2" fill="#8090b0"/></svg>
<svg style="left:702px;top:58px" width="16" height="16" viewBox="0 0 16 16"><path d="M1 15l3-6 6-7 3 1-2 2-6 8z" fill="#fff0a0"/><path d="M4 9l6-8 5 3-6 8z" fill="#f0b040" stroke="#c08020" stroke-width="0.8"/><path d="M3 10l4 3 2-2-4-3z" fill="#a8a8a8" stroke="#807060" stroke-width="0.6"/><circle cx="11" cy="4" r="0.8" fill="#2050a0"/></svg>
<svg style="left:725px;top:63px" width="7" height="4" viewBox="0 0 7 4"><path d="M0 0h7l-3.5 4z" fill="#000"/></svg>
<svg style="left:738px;top:58px" width="2" height="14" viewBox="0 0 2 14"><rect x="0" y="0" width="2" height="2" fill="#b8ab94"/><rect x="0" y="4" width="2" height="2" fill="#b8ab94"/><rect x="0" y="8" width="2" height="2" fill="#b8ab94"/><rect x="0" y="12" width="2" height="2" fill="#b8ab94"/></svg>
<svg style="left:744px;top:58px" width="16" height="16" viewBox="0 0 16 16"><path d="M0 14h5l10-14-6 6z" fill="#e4e4dc" stroke="#c8c8c0"/></svg>
<svg style="left:770px;top:60px" width="16" height="16" viewBox="0 0 16 16"><circle cx="4" cy="8" r="3.5" fill="#a8a8a8"/><circle cx="11" cy="3" r="2.5" fill="#b0b0b0"/><path d="M2 1h3M8 1h1" stroke="#b0b0b0"/></svg>
<svg style="left:789px;top:58px" width="2" height="14" viewBox="0 0 2 14"><rect x="0" y="0" width="2" height="2" fill="#b8ab94"/><rect x="0" y="4" width="2" height="2" fill="#b8ab94"/><rect x="0" y="8" width="2" height="2" fill="#b8ab94"/><rect x="0" y="12" width="2" height="2" fill="#b8ab94"/></svg>
<svg style="left:797px;top:57px" width="16" height="16" viewBox="0 0 16 16"><rect x="4.5" y="2.5" width="10" height="13" fill="#f6f6f6" stroke="#c8c8c8"/><path d="M8 6.5h5M8 8.5h5M8 10.5h5M8 12.5h5" stroke="#b0b0b0" stroke-dasharray="2 1"/><path d="M3 0h3v6h2.5l-4 5-4-5h2.5z" fill="#f4f4f4" stroke="#b8b8b8"/><rect x="1" y="13" width="5" height="2" fill="#c0c0c0"/></svg>
<svg style="left:819px;top:63px" width="7" height="4" viewBox="0 0 7 4"><path d="M0 0h7l-3.5 4z" fill="#555"/></svg>
<svg style="left:834px;top:57px" width="16" height="16" viewBox="0 0 16 16"><rect x="1.5" y="0.5" width="12" height="13" fill="#f6f6f6" stroke="#c8c8c8"/><path d="M6 3.5h6M6 5.5h6M8 7.5h4M8 9.5h4M8 11.5h4" stroke="#b0b0b0" stroke-dasharray="2 1"/><path d="M3 15.5h3v-6h2.5l-4-5-4 5h2.5z" fill="#f4f4f4" stroke="#b8b8b8"/></svg>
<svg style="left:857px;top:63px" width="7" height="4" viewBox="0 0 7 4"><path d="M0 0h7l-3.5 4z" fill="#555"/></svg>
<svg style="left:871px;top:59px" width="16" height="16" viewBox="0 0 16 16"><path d="M1 6l5-5.5v3h8.5q1 0 1 1v3q0 1-1 1h-8.5v3z" fill="#f8f8f8" stroke="#c8c8c8" stroke-linejoin="round"/><path d="M1 0l3 3M4 0l-3 3M2.5 -0.5v4" stroke="#909090" stroke-width="0.8"/></svg>
<svg style="left:894px;top:59px" width="16" height="16" viewBox="0 0 16 16"><g transform="translate(16,0) scale(-1,1)"><path d="M1 6l5-5.5v3h8.5q1 0 1 1v3q0 1-1 1h-8.5v3z" fill="#f8f8f8" stroke="#c8c8c8" stroke-linejoin="round"/><path d="M1 0l3 3M4 0l-3 3M2.5 -0.5v4" stroke="#909090" stroke-width="0.8"/></g></svg>
<svg style="left:918px;top:59px" width="16" height="16" viewBox="0 0 16 16"><path d="M0.8 6l5.5-5.5v3h7.5q1.5 0 1.5 1.5v2q0 1.5-1.5 1.5h-7.5v3z" fill="#fff0b0" stroke="#c88a10" stroke-width="1.4" stroke-linejoin="round"/></svg>
<svg style="left:941px;top:63px" width="7" height="4" viewBox="0 0 7 4"><path d="M0 0h7l-3.5 4z" fill="#000"/></svg>
<svg style="left:957px;top:59px" width="16" height="16" viewBox="0 0 16 16"><g transform="translate(16,0) scale(-1,1)"><path d="M1 6l5-5.5v3h8.5q1 0 1 1v3q0 1-1 1h-8.5v3z" fill="#f8f8f8" stroke="#c8c8c8" stroke-linejoin="round"/></g></svg>
<svg style="left:979px;top:63px" width="7" height="4" viewBox="0 0 7 4"><path d="M0 0h7l-3.5 4z" fill="#666"/></svg>
<svg style="left:992px;top:56px" width="1" height="18" viewBox="0 0 1 18"><rect x="0" y="0" width="1" height="18" fill="#888"/></svg>
<svg style="left:1001px;top:58px" width="16" height="16" viewBox="0 0 16 16"><rect x="0.5" y="3.5" width="13" height="11" fill="#e8f4ff" stroke="#a89060"/><rect x="1" y="3" width="12" height="2" fill="#3c83d4"/><path d="M8 7l5-6 3 3-6 5z" fill="#2e9a40"/><path d="M6 10l3-3" stroke="#333"/></svg>
<svg style="left:1079px;top:58px" width="16" height="16" viewBox="0 0 16 16"><circle cx="6" cy="6" r="4.5" fill="none" stroke="#707070" stroke-width="2"/><path d="M9 9l5.5 5.5" stroke="#707070" stroke-width="2.2"/></svg>
<svg style="left:1111px;top:58px" width="2" height="14" viewBox="0 0 2 14"><rect x="0" y="0" width="2" height="2" fill="#b8ab94"/><rect x="0" y="4" width="2" height="2" fill="#b8ab94"/><rect x="0" y="8" width="2" height="2" fill="#b8ab94"/><rect x="0" y="12" width="2" height="2" fill="#b8ab94"/></svg>
<svg style="left:1118px;top:58px" width="16" height="16" viewBox="0 0 16 16"><rect x="0.5" y="3.5" width="11" height="11" rx="1" fill="#e8f4ff" stroke="#8a7a50"/><rect x="1" y="3" width="10" height="2" fill="#3c83d4"/><path d="M1 9h10M5 5v9" stroke="#8a7a50"/><path d="M11 0l3 3-3 3-3-3z" fill="#fff0b0" stroke="#c09018"/></svg>
<svg style="left:1139px;top:56px" width="1" height="18" viewBox="0 0 1 18"><rect x="0" y="0" width="1" height="18" fill="#888"/></svg>
<svg style="left:1149px;top:57px" width="16" height="16" viewBox="0 0 16 16"><rect x="0.5" y="0.5" width="11" height="11" fill="#e8f4ff" stroke="#6a6040"/><rect x="1" y="0.5" width="10" height="2" fill="#2a6ac8"/><path d="M1 6h5M5 2v9" stroke="#6a6040"/><rect x="6.5" y="5.5" width="9" height="10" fill="#fff" stroke="#8a7a40"/><text x="8" y="14" font-family="Liberation Sans" font-weight="bold" font-size="8.5" fill="#2050a0">C</text></svg>
<div style="left:1168px;top:54px;width:24px;height:22px;background:#cce4f7;border:1px solid #99d1ff"></div>
<svg style="left:1173px;top:58px" width="16" height="16" viewBox="0 0 16 16"><g stroke="#2e6a54" stroke-width="1.3" stroke-linecap="round" fill="none"><path d="M4.5 3.3V0.6M7.6 4.4L8.6 1.3M3.3 4.5H0.6M10.6 5.4L12.3 5.5 13.4 6.3M5 8.2L3.3 9.2 1.4 9M12.3 9.6L13.6 10 14.4 11.3M6.2 11L5.6 12.6 6.2 14M9.8 12.6L10 14 11.5 15"/></g><ellipse cx="8.7" cy="8.6" rx="3.5" ry="4.9" transform="rotate(-42 8.7 8.6)" fill="#c8e4b0" stroke="#1f78a0" stroke-width="1.2"/><path d="M7.5 7.5l2.5 3" stroke="#78b068" stroke-width="0.9"/><circle cx="4.6" cy="4.6" r="1.6" fill="#b8dca8" stroke="#1f78a0" stroke-width="1.1"/></svg>
<svg style="left:1205px;top:8px" width="16" height="17" viewBox="0 0 16 17"><rect x="6.5" y="0.5" width="8.5" height="8" rx="1" fill="#c4c4c4" stroke="#000" stroke-width="0.95"/><rect x="8" y="2" width="5" height="4" fill="#0000e8"/><path d="M9 8.5h6l-1 1.5h-5z" fill="#909090" stroke="#000" stroke-width="0.8"/><rect x="1.5" y="6.5" width="8" height="8" rx="1" fill="#c4c4c4" stroke="#000" stroke-width="0.95"/><rect x="3" y="8" width="5" height="4" fill="#0000e8"/><path d="M0.5 14.5h9l-1 1.5h-8z" fill="#d0d0d0" stroke="#000" stroke-width="1"/><path d="M4 12L12 4" stroke="#f0f000" stroke-width="1.8"/></svg>
<svg style="left:7px;top:86px" width="16" height="16" viewBox="0 0 16 16"><g stroke="#2e6a54" stroke-width="1.3" stroke-linecap="round" fill="none"><path d="M4.5 3.3V0.6M7.6 4.4L8.6 1.3M3.3 4.5H0.6M10.6 5.4L12.3 5.5 13.4 6.3M5 8.2L3.3 9.2 1.4 9M12.3 9.6L13.6 10 14.4 11.3M6.2 11L5.6 12.6 6.2 14M9.8 12.6L10 14 11.5 15"/></g><ellipse cx="8.7" cy="8.6" rx="3.5" ry="4.9" transform="rotate(-42 8.7 8.6)" fill="#c8e4b0" stroke="#1f78a0" stroke-width="1.2"/><path d="M7.5 7.5l2.5 3" stroke="#78b068" stroke-width="0.9"/><circle cx="4.6" cy="4.6" r="1.6" fill="#b8dca8" stroke="#1f78a0" stroke-width="1.1"/></svg>
<svg style="left:89px;top:85px" width="16" height="16" viewBox="0 0 16 16"><path d="M1.5 0.5h6l2 2v8h-8z" fill="#fff" stroke="#b0a890"/><path d="M3 3h4M3 5h4M3 7h3" stroke="#5a8ad0"/><path d="M5.5 7.5h3l1 1h5v6.5h-9z" fill="#ffd870" stroke="#b07820"/></svg>
<svg style="left:108px;top:110px" width="16" height="16" viewBox="0 0 16 16"><rect x="0.5" y="0.5" width="10" height="10" fill="#e8f0fa" stroke="#a0b4cc"/><rect x="3.5" y="3.5" width="10" height="10" fill="#f0f6ff" stroke="#5a7ab0"/><path d="M5.5 8.5h6" stroke="#2050a0" stroke-width="1.4"/></svg>
<svg style="left:130px;top:108px" width="16" height="16" viewBox="0 0 16 16"><path d="M2.5 2.5l9 9M11.5 2.5l-9 9" stroke="#a4a4a4" stroke-width="3.6" stroke-linecap="round"/><path d="M2.5 2.5l9 9M11.5 2.5l-9 9" stroke="#c4c4c4" stroke-width="2" stroke-linecap="round"/></svg>
<svg style="left:151px;top:107px" width="1" height="17" viewBox="0 0 1 17"><rect x="0" y="0" width="1" height="17" fill="#a0a0a0"/></svg>
<svg style="left:160px;top:110px" width="16" height="16" viewBox="0 0 16 16"><path d="M2 4h4v6h1.5v1.5h-5.5v-1.5h1.5v-4.5h-1.5z" fill="#00108c"/><rect x="3" y="0.5" width="3" height="2.5" fill="#00108c"/><path d="M6.5 5h4v-3l5 4-5 4v-3h-4z" fill="#d8d020" stroke="#8a7a10" stroke-width="0.8"/></svg>
<svg style="left:188px;top:109px" width="5" height="15" viewBox="0 0 5 15"><circle cx="2.5" cy="2" r="1.7" fill="none" stroke="#707070" stroke-width="1"/><circle cx="2.5" cy="7" r="1.7" fill="none" stroke="#707070" stroke-width="1"/><circle cx="2.5" cy="12" r="1.7" fill="none" stroke="#707070" stroke-width="1"/></svg>
<svg style="left:216px;top:86px" width="12" height="14" viewBox="0 0 12 14"><path d="M0.5 0.5h7l3 3v10h-10z" fill="#f8f8f0" stroke="#a89058"/><text x="0.8" y="11.5" font-family="Liberation Sans" font-weight="bold" font-size="9" fill="#2a62b0">.c</text></svg>
<svg style="left:299px;top:86px" width="15" height="14" viewBox="0 0 15 14"><rect x="0.5" y="0.5" width="14" height="13" fill="#e4f2fe" stroke="#a89058"/><rect x="1" y="1" width="13" height="2" fill="#3c83d4"/><text x="4" y="11.5" font-family="Liberation Sans" font-weight="bold" font-size="9" fill="#2a62b0">c</text></svg>
<svg style="left:979px;top:87px" width="15" height="12" viewBox="0 0 15 12"><circle cx="4" cy="4" r="3.5" fill="#4a90d8" stroke="#2a6ab0" stroke-width="0.6"/><circle cx="11" cy="8" r="3.5" fill="#4a90d8" stroke="#2a6ab0" stroke-width="0.6"/></svg>
<svg style="left:1045px;top:85px" width="16" height="16" viewBox="0 0 16 16"><g stroke="#3a80c8" fill="none" stroke-width="1.2"><circle cx="3.5" cy="7.5" r="2.6" fill="#f4f9ff"/><circle cx="10" cy="7.5" r="2.6" fill="#f4f9ff"/><path d="M6.1 7h1.3M1 6.5Q1.5 2.5 5 2M12.5 6.5Q13 2.5 15.5 2"/><path d="M5 11.5l2.2 2.8M7.2 11.5l-2.2 2.8M9 12.2h3M9 14.2h3" stroke-width="1"/></g></svg>
<svg style="left:1093px;top:86px" width="16" height="16" viewBox="0 0 16 16"><rect x="4.5" y="0.5" width="6" height="5" fill="#e8f0ff" stroke="#6080b0"/><path d="M7.5 6v3M2.5 9h10M2.5 9v2M12.5 9v2" stroke="#6080b0"/><rect x="0.5" y="11.5" width="4" height="3.5" fill="#ffe890" stroke="#c09020"/><rect x="10.5" y="11.5" width="4" height="3.5" fill="#ffe890" stroke="#c09020"/></svg>
<svg style="left:953px;top:109px" width="16" height="16" viewBox="0 0 16 16"><path d="M2.5 2.5l9 9M11.5 2.5l-9 9" stroke="#a4a4a4" stroke-width="3.6" stroke-linecap="round"/><path d="M2.5 2.5l9 9M11.5 2.5l-9 9" stroke="#c4c4c4" stroke-width="2" stroke-linecap="round"/></svg>
<svg style="left:975px;top:108px" width="16" height="16" viewBox="0 0 16 16"><path d="M1.5 1.5l7 7M8.5 1.5l-7 7" stroke="#808080" stroke-width="3" stroke-linecap="round"/><path d="M1.5 1.5l7 7M8.5 1.5l-7 7" stroke="#fff" stroke-width="1.4" stroke-linecap="round"/><path d="M5.5 5.5l8 8M13.5 5.5l-8 8" stroke="#686868" stroke-width="3.4" stroke-linecap="round"/><path d="M5.5 5.5l8 8M13.5 5.5l-8 8" stroke="#8a8a8a" stroke-width="1.8" stroke-linecap="round"/></svg>
<svg style="left:997px;top:108px" width="16" height="16" viewBox="0 0 16 16"><circle cx="5" cy="11" r="3.5" fill="#f2c040" stroke="#b08020"/><circle cx="11" cy="5" r="3.5" fill="#f2c040" stroke="#b08020"/><path d="M1 6q1-5 6-5M15 10q-1 5-6 5" stroke="#2a6ab0" fill="none" stroke-width="1.2"/></svg>
<svg style="left:1020px;top:108px" width="16" height="16" viewBox="0 0 16 16"><rect x="6.5" y="0.5" width="8" height="14" fill="#f6f6f6" stroke="#d0d0d0"/><path d="M0 7h6v-2l3 3-3 3v-2h-6z" fill="#e8e8e8" stroke="#c8c8c8"/></svg>
<svg style="left:1046px;top:110px" width="12" height="12" viewBox="0 0 12 12"><circle cx="6" cy="7" r="3.3" fill="none" stroke="#2f6fb0" stroke-width="1.6"/><path d="M0.5 0.5L11 11" stroke="#888" stroke-width="1.3"/></svg>
<svg style="left:1066px;top:108px" width="1" height="16" viewBox="0 0 1 16"><rect x="0" y="0" width="1" height="16" fill="#a0a0a0"/></svg>
<svg style="left:1076px;top:109px" width="16" height="16" viewBox="0 0 16 16"><rect x="0.5" y="0.5" width="10" height="10" fill="#e8f0fa" stroke="#a0b4cc"/><rect x="3.5" y="3.5" width="10" height="10" fill="#f0f6ff" stroke="#5a7ab0"/><path d="M5.5 8.5h6" stroke="#2050a0" stroke-width="1.4"/><path d="M8.5 5.5v6" stroke="#2050a0" stroke-width="1.4"/></svg>
<svg style="left:1099px;top:109px" width="16" height="16" viewBox="0 0 16 16"><rect x="0.5" y="0.5" width="10" height="10" fill="#e8f0fa" stroke="#a0b4cc"/><rect x="3.5" y="3.5" width="10" height="10" fill="#f0f6ff" stroke="#5a7ab0"/><path d="M5.5 8.5h6" stroke="#2050a0" stroke-width="1.4"/></svg>
<svg style="left:1120px;top:108px" width="16" height="16" viewBox="0 0 16 16"><path d="M5 0.5l-4 3.5 4 3.5v-2h7v-3h-7z" fill="#ffe8a0" stroke="#c89018"/><path d="M11 8.5l4 3.5-4 3.5v-2h-7v-3h7z" fill="#ffe8a0" stroke="#c89018"/></svg>
<svg style="left:1142px;top:108px" width="1" height="16" viewBox="0 0 1 16"><rect x="0" y="0" width="1" height="16" fill="#a0a0a0"/></svg>
<svg style="left:1152px;top:108px" width="16" height="16" viewBox="0 0 16 16"><path d="M4 1v6q0 3-3 3" stroke="#2a5ab0" stroke-width="1.8" fill="none"/><rect x="8" y="5" width="3" height="7" rx="1" fill="#f2c030"/><circle cx="9.5" cy="14" r="1.5" fill="#f2c030"/></svg>
<svg style="left:1180px;top:109px" width="5" height="15" viewBox="0 0 5 15"><circle cx="2.5" cy="2" r="1.7" fill="none" stroke="#707070" stroke-width="1"/><circle cx="2.5" cy="7" r="1.7" fill="none" stroke="#707070" stroke-width="1"/><circle cx="2.5" cy="12" r="1.7" fill="none" stroke="#707070" stroke-width="1"/></svg>
<svg style="left:968px;top:129px" width="12" height="12" viewBox="0 0 12 12"><circle cx="3.6" cy="6.8" r="3.3" fill="#5a90c8" stroke="#3a6aa0" stroke-width="0.7"/><path d="M4.5 3.2H10M8 1l2.4 2.2L8 5.4" stroke="#1a8040" stroke-width="1.4" fill="none"/></svg>
<svg style="left:214px;top:815px" width="16" height="16" viewBox="0 0 16 16"><rect x="0.5" y="0.5" width="13" height="10" rx="1" fill="#e8f4ff" stroke="#2a5a98" stroke-width="1.4"/><path d="M3 4h6M3 6.5h4" stroke="#2a4a98"/><rect x="2" y="11" width="9" height="2" fill="#2a5a98"/></svg>
<svg style="left:307px;top:815px" width="16" height="16" viewBox="0 0 16 16"><text x="0" y="6.5" font-family="Liberation Mono" font-size="6.5" fill="#3a7ac0">1010</text><text x="0" y="14" font-family="Liberation Mono" font-size="6.5" fill="#3a7ac0">0101</text></svg>
<svg style="left:383px;top:815px" width="16" height="16" viewBox="0 0 16 16"><rect x="0.5" y="0.5" width="10" height="14" fill="#f8f8f8" stroke="#a09070"/><circle cx="5" cy="4.5" r="2.5" fill="#e02020"/><path d="M2 13l3-4 3 4z" fill="#f0b020"/><path d="M11 1l3 2v12h-3" fill="#f0f0f0" stroke="#a0a0a0"/></svg>
<svg style="left:463px;top:815px" width="16" height="16" viewBox="0 0 16 16"><circle cx="7.5" cy="7.5" r="7" fill="#5a8ad0" stroke="#3a6ab0"/><path d="M5.5 3.5v8l6-4z" fill="#fff"/></svg>
<svg style="left:557px;top:815px" width="16" height="16" viewBox="0 0 16 16"><rect x="1.5" y="1.5" width="11" height="13" rx="1" fill="#f8f8f0" stroke="#b0a070"/><path d="M3 0.5v2M5 0.5v2M7 0.5v2M9 0.5v2M11 0.5v2" stroke="#807050"/><path d="M8 5v5q0 2-2.5 2" stroke="#2a5ab0" stroke-width="1.6" fill="none"/></svg>
<svg style="left:649px;top:815px" width="16" height="16" viewBox="0 0 16 16"><rect x="0.5" y="0.5" width="13" height="10" rx="1" fill="#e8f4ff" stroke="#2a5a98" stroke-width="1.4"/><path d="M3 4h6M3 6.5h4" stroke="#2a4a98"/><rect x="2" y="11" width="9" height="2" fill="#2a5a98"/><path d="M9 9l6 6" stroke="#3a9a48" stroke-width="3"/></svg>
<svg style="left:779px;top:813px" width="10" height="16" viewBox="0 0 10 16"><rect x="0.5" y="0.5" width="8" height="15" rx="4" fill="#c8dcf8" stroke="#4a70b8"/><path d="M1 3q3.5 2 7 0" stroke="#4a70b8" fill="none"/></svg>
<svg style="left:851px;top:815px" width="13" height="13" viewBox="0 0 13 13"><rect x="0.7" y="0.7" width="10.6" height="10.6" rx="1.5" fill="#e8202e" stroke="#c01820" stroke-width="1.2"/></svg>
<svg style="left:874px;top:815px" width="16" height="16" viewBox="0 0 16 16"><path d="M2.5 2.5l9 9M11.5 2.5l-9 9" stroke="#a4a4a4" stroke-width="3.6" stroke-linecap="round"/><path d="M2.5 2.5l9 9M11.5 2.5l-9 9" stroke="#c4c4c4" stroke-width="2" stroke-linecap="round"/></svg>
<svg style="left:897px;top:815px" width="16" height="16" viewBox="0 0 16 16"><path d="M1.5 1.5l7 7M8.5 1.5l-7 7" stroke="#808080" stroke-width="3" stroke-linecap="round"/><path d="M1.5 1.5l7 7M8.5 1.5l-7 7" stroke="#fff" stroke-width="1.4" stroke-linecap="round"/><path d="M5.5 5.5l8 8M13.5 5.5l-8 8" stroke="#686868" stroke-width="3.4" stroke-linecap="round"/><path d="M5.5 5.5l8 8M13.5 5.5l-8 8" stroke="#8a8a8a" stroke-width="1.8" stroke-linecap="round"/></svg>
<svg style="left:917px;top:812px" width="1" height="18" viewBox="0 0 1 18"><rect x="0" y="0" width="1" height="18" fill="#a0a0a0"/></svg>
<svg style="left:927px;top:814px" width="16" height="16" viewBox="0 0 16 16"><path d="M0.5 0.5h8l3 3v11h-11z" fill="#fff" stroke="#b0a070"/><path d="M2 4h6M2 6h6M2 8h5M2 10h4" stroke="#4a7ac0"/><path d="M9 10l5 5M14 10l-5 5" stroke="#606060" stroke-width="1.6"/></svg>
<svg style="left:950px;top:814px" width="16" height="16" viewBox="0 0 16 16"><rect x="8.5" y="0.5" width="7" height="14" fill="#f8f8f8" stroke="#a0a8b8"/><rect x="12" y="3" width="2" height="3" fill="#4a6a98"/><path d="M2 8v-2q0-3 3-3t3 3v2" stroke="#a08040" fill="none" stroke-width="1.4"/><rect x="0.5" y="8.5" width="8" height="6.5" fill="#f0c040" stroke="#a08020"/></svg>
<svg style="left:973px;top:814px" width="16" height="16" viewBox="0 0 16 16"><path d="M0.5 0.5h8l3 3v11h-11z" fill="#fff" stroke="#b0a070"/><path d="M2 4h6M2 6h6M2 8h5" stroke="#4a7ac0"/><path d="M13 6v5h-5v-2l-3 3 3 3v-2h7v-7z" fill="#ffe8a0" stroke="#c89018"/></svg>
<div style="left:993px;top:810px;width:23px;height:22px;background:#cce4f7;border:1px solid #99d1ff"></div>
<div style="left:1015px;top:810px;width:23px;height:22px;background:#cce4f7;border:1px solid #99d1ff"></div>
<svg style="left:996px;top:814px" width="16" height="16" viewBox="0 0 16 16"><rect x="3.5" y="0.5" width="12" height="9" rx="1" fill="#f8fcff" stroke="#4a6aa8"/><path d="M6 3h7M6 5h7M6 7h5" stroke="#4a6aa8" stroke-width="0.8"/><rect x="0.5" y="5.5" width="9" height="7" fill="#e8f2fe" stroke="#4a6aa8"/><rect x="2" y="13" width="5" height="1.5" fill="#4a6aa8"/></svg>
<svg style="left:1019px;top:814px" width="16" height="16" viewBox="0 0 16 16"><rect x="3.5" y="0.5" width="12" height="9" rx="1" fill="#f8fcff" stroke="#4a6aa8"/><path d="M6 3h7M6 5h7M6 7h5" stroke="#4a6aa8" stroke-width="0.8"/><rect x="0.5" y="5.5" width="9" height="7" fill="#e8f2fe" stroke="#4a6aa8"/><rect x="2" y="13" width="5" height="1.5" fill="#4a6aa8"/><path d="M7 1.5l4 4M11 1.5l-4 4" stroke="#e02020" stroke-width="1.5"/></svg>
<svg style="left:1044px;top:812px" width="1" height="18" viewBox="0 0 1 18"><rect x="0" y="0" width="1" height="18" fill="#a0a0a0"/></svg>
<svg style="left:1051px;top:814px" width="16" height="16" viewBox="0 0 16 16"><rect x="0.5" y="4.5" width="13" height="10" fill="#e8f4ff" stroke="#8a7a50"/><rect x="1" y="4" width="12" height="2" fill="#3c83d4"/><path d="M8 6l5-6 3 3-6 5z" fill="#2e9a40"/><path d="M6 9l3-3" stroke="#333"/></svg>
<svg style="left:1075px;top:814px" width="16" height="16" viewBox="0 0 16 16"><rect x="0.5" y="0.5" width="13" height="10" rx="1.5" fill="#e8f4ff" stroke="#2a62b8" stroke-width="1.6"/><rect x="3" y="4" width="5" height="1.2" fill="#2a4a98"/><rect x="3" y="6.5" width="7" height="1.2" fill="#2a4a98"/><rect x="5" y="11" width="4" height="2" fill="#2a62b8"/><rect x="1" y="13" width="12" height="1.5" fill="#2a62b8"/></svg>
<svg style="left:1096px;top:819px" width="7" height="4" viewBox="0 0 7 4"><path d="M0 0h7l-3.5 4z" fill="#000"/></svg>
<svg style="left:1113px;top:813px" width="16" height="16" viewBox="0 0 16 16"><rect x="0.5" y="2.5" width="13" height="12" fill="#e4f2fe" stroke="#a88a4c"/><rect x="1" y="2" width="12" height="2" fill="#3c83d4"/><path d="M11.5 0l2.5 2.5-2.5 2.5-2.5-2.5z" fill="#fff6c8" stroke="#c09018"/><path d="M2 13q6 0 9-6" stroke="#f0d890" stroke-width="1.2" fill="none"/></svg>
<svg style="left:1134px;top:819px" width="7" height="4" viewBox="0 0 7 4"><path d="M0 0h7l-3.5 4z" fill="#000"/></svg>
</body></html>
